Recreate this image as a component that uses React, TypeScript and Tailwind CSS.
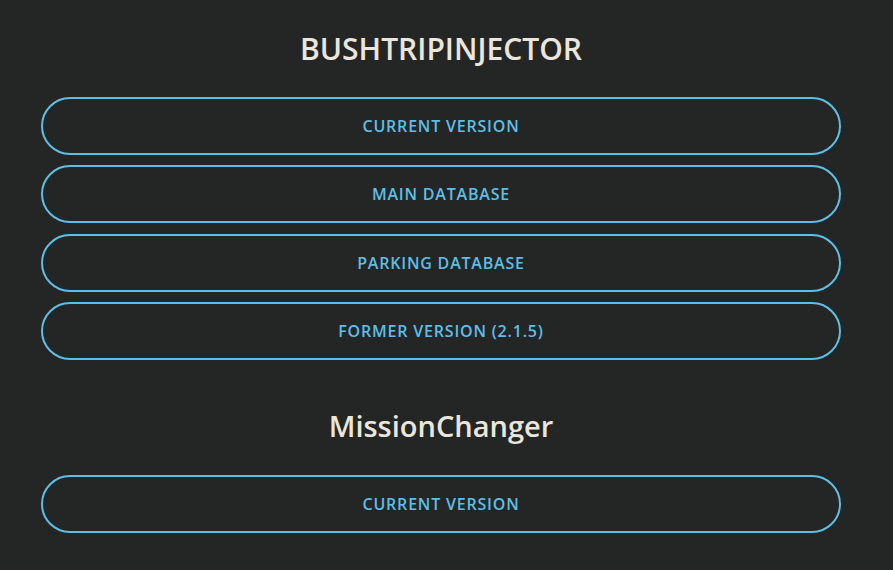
const links = ["CURRENT VERSION", "MAIN DATABASE", "PARKING DATABASE", "FORMER VERSION (2.1.5)"];

const LinkButton = ({ label }: { label: string }) => (
  <button className="flex h-[58px] w-full items-center justify-center rounded-full border-2 border-[#5ebfe6] bg-transparent text-[16px] font-semibold tracking-[0.8px] text-[#5ebfe6]">
    {label}
  </button>
);

const App = () => {
  return (
    <div className="min-h-[570px] bg-[#242626] pl-[41px] pr-[52px] pt-[29px] font-['Open_Sans',sans-serif]">
      {/* BushTripInjector */}
      <h1 className="text-center text-[30px] font-semibold leading-[40px] text-[#ebe6dd]">BUSHTRIPINJECTOR</h1>
      <div className="mt-[28px] flex flex-col gap-[10.3px]">
        {links.map((l) => (
          <LinkButton key={l} label={l} />
        ))}
      </div>

      {/* MissionChanger */}
      <h2 className="mt-[46.5px] text-center text-[29px] font-semibold leading-[40px] text-[#ebe6dd]">MissionChanger</h2>
      <div className="mt-[28.5px] flex flex-col">
        <LinkButton label="CURRENT VERSION" />
      </div>
    </div>
  );
};

export default App;
